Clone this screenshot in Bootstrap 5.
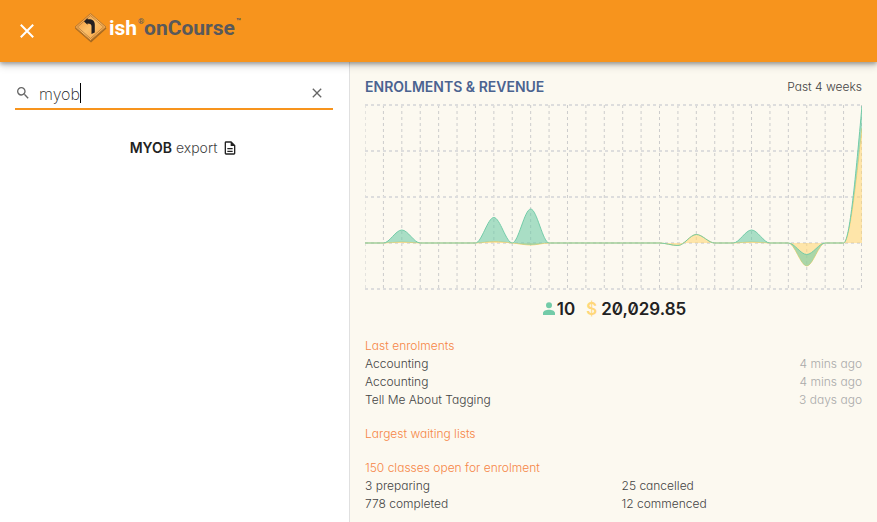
<!DOCTYPE html>
<html lang="en">
<head>
<meta charset="utf-8">
<meta name="viewport" content="width=device-width, initial-scale=1">
<title>ish onCourse</title>
<link href="https://cdn.jsdelivr.net/npm/bootstrap@5.3.0/dist/css/bootstrap.min.css" rel="stylesheet">
<style>
  body { font-family: Inter, "Liberation Sans", sans-serif; font-size: 14px; font-weight: 300; line-height: 18px; color: #222; background: #fff; }
  .topbar { height: 62px; background: #f7941d; box-shadow: 0 2px 4px rgba(0,0,0,.3), 0 4px 8px rgba(0,0,0,.15); z-index: 2; padding-left: 18px; gap: 38px; }
  .close-btn { width: 18px; height: 18px; }
  .brand { color: #58595b; font: bold 21px/28px Roboto, "Liberation Sans", sans-serif; margin-bottom: 6px; gap: 1px; }
  .brand sup { font-size: 8px; line-height: 8px; top: -6px; width: 5px; }
  .main-split { grid-template-columns: 39.8% 1fr; display: grid; }
  .search-pane { padding: 16px 16px 0 15px; }
  .search-field { height: 32px; border-bottom: 2px solid #f7941d; gap: 0; }
  .search-field input { width: 41px; font-size: 16px; font-weight: 200; line-height: 20px; color: #222; outline: 0; caret-color: transparent; padding: 2px 0 0; }
  .caret { width: 1px; height: 20px; background: #000; }
  .result { margin-top: 29px; padding-left: 20px; gap: 5px; color: #444; text-decoration: none; }
  .result b { font-weight: 600; color: #222; }
  .dash-pane { background: #fcf9f0; border-left: 1px solid #e0e0e0; padding: 16px 15px 9px; font-size: 12px; font-feature-settings: "cv11"; color: #444; }
  .dash-title { font-size: 14px; font-weight: 600; color: #4b6390; margin: 0; font-feature-settings: normal; line-height: 18px; }
  .chart { display: block; width: 100%; height: 186px; margin-top: 8px; }
  .totals { font-size: 17px; font-weight: 600; color: #222; margin: 9px 0 18px; line-height: 20px; gap: 11px; }
  .amount { font-feature-settings: "zero"; }
  .dollar { color: #ffd77a; }
  .section-title { font-size: 12px; font-weight: 300; line-height: 18px; color: #f68647; margin: 0; }
  .ago { color: #aaa; }
</style>
<script src="https://cdn.jsdelivr.net/npm/bootstrap@5.3.0/dist/js/bootstrap.bundle.min.js"></script>
</head>
<body class="min-vh-100 d-flex flex-column">
<header class="topbar d-flex align-items-center position-relative">
  <button type="button" class="close-btn btn p-0 border-0 d-flex align-items-center justify-content-center" aria-label="Close">
    <svg width="14" height="14" viewBox="0 0 14 14" stroke="#fff" stroke-width="2"><path d="M.8.8 13.2 13.2M13.2.8.8 13.2"/></svg>
  </button>
  <a href="#" class="brand d-flex align-items-center text-decoration-none">
    <svg width="34" height="32" viewBox="0 0 34 32">
      <defs><linearGradient id="sign" x1="0" y1="0" x2="1" y2="1"><stop offset="0" stop-color="#f08c28"/><stop offset=".5" stop-color="#fcc06a"/><stop offset="1" stop-color="#f79a32"/></linearGradient></defs>
      <path d="M17 3 32.500 16.500 17 30.500 1 16.500Z" fill="#8a5a20" opacity=".75"/>
      <path d="M16.500 1.500 32 15 16.500 28.500 1 15Z" fill="url(#sign)" stroke="#b87830" stroke-width="1"/>
      <path d="M16.500 3.500 29.500 15 16.500 26.500 3.500 15Z" fill="none" stroke="#a06a30" stroke-width=".6"/>
      <path d="M10 9.500 13.500 6V7.200C18 6.800 20.800 8.500 20.800 12.500L20.800 20.500 17.500 22V14.500C17.500 12.500 16.500 11.500 13.500 11.500V12.800Z" fill="#231f20"/>
    </svg>
    <span class="text-white">ish</span><sup>®</sup><span>onCourse</span><sup>™</sup>
  </a>
</header>
<main class="main-split flex-grow-1">
  <section class="search-pane">
    <div class="search-field d-flex align-items-center">
      <svg width="16" height="16" viewBox="0 0 24 24" fill="#666" class="me-2"><path d="M15.500 14h-.79l-.28-.27A6.470 6.470 0 0 0 16 9.500 6.500 6.500 0 1 0 9.500 16c1.610 0 3.090-.59 4.230-1.570l.27.28v.79l5 4.990L20.490 19l-4.990-5zm-6 0C7.010 14 5 11.990 5 9.500S7.010 5 9.500 5 14 7.010 14 9.500 11.990 14 9.500 14z"/></svg>
      <input type="text" class="border-0 bg-transparent" value="myob" aria-label="Search">
      <span class="caret"></span>
      <button type="button" class="btn p-0 border-0 ms-auto me-2 d-flex" aria-label="Clear search">
        <svg width="16" height="16" viewBox="0 0 24 24" fill="#666"><path d="M19 6.410 17.590 5 12 10.590 6.410 5 5 6.410 10.590 12 5 17.590 6.410 19 12 13.410 17.590 19 19 17.590 13.410 12z"/></svg>
      </button>
    </div>
    <div class="d-flex justify-content-center">
      <a href="#" class="result d-flex align-items-center"><span><b>MYOB</b> export</span>
        <svg width="16" height="16" viewBox="0 0 24 24" fill="#222"><path d="M8 16h8v2H8zm0-4h8v2H8zm6-10H6c-1.100 0-2 .9-2 2v16c0 1.100.89 2 1.990 2H18c1.100 0 2-.9 2-2V8l-6-6zm4 18H6V4h7v5h5v11z"/></svg></a>
    </div>
  </section>
  <section class="dash-pane">
    <div class="d-flex justify-content-between align-items-center">
      <h2 class="dash-title">ENROLMENTS &amp; REVENUE</h2><span>Past 4 weeks</span>
    </div>
    <svg class="chart" viewBox="0 0 497 186" preserveAspectRatio="none" role="img" aria-label="Enrolments and revenue by day">
      <g id="grid" stroke="#ccc" stroke-dasharray="3 3" fill="none"></g>
      <g id="areas" fill="none"></g>
    </svg>
    <div class="totals d-flex justify-content-center">
      <span class="d-flex align-items-center"><svg width="16" height="16" viewBox="0 0 24 24" fill="#72cba8"><path d="M12 11a4.500 4.500 0 1 0 0-9 4.500 4.500 0 0 0 0 9zm0 2c-4 0-9 1.800-9 5v3h18v-3c0-3.200-5-5-9-5z"/></svg><span>10</span></span>
      <span class="amount"><span class="dollar me-1">$</span>20,029.85</span>
    </div>
    <h3 class="section-title">Last enrolments</h3>
    <div class="d-flex justify-content-between"><span>Accounting</span><span class="ago">4 mins ago</span></div>
    <div class="d-flex justify-content-between"><span>Accounting</span><span class="ago">4 mins ago</span></div>
    <div class="d-flex justify-content-between"><span>Tell Me About Tagging</span><span class="ago">3 days ago</span></div>
    <h3 class="section-title mt-3">Largest waiting lists</h3>
    <h3 class="section-title mt-3">150 classes open for enrolment</h3>
    <div class="d-flex gap-3"><div class="col">3 preparing</div><div class="col">25 cancelled</div></div>
    <div class="d-flex gap-3"><div class="col">778 completed</div><div class="col">12 commenced</div></div>
  </section>
</main>
<script>
  const step = 497 / 27, zero = 139;
  let lines = '';
  for (let i = 0; i < 28; i++) lines += `<path d="M${Math.min(i * step, 496.5)} 1V185"/>`;
  for (let j = 0; j < 5; j++) lines += `<path stroke="#ddd" stroke-width="2" d="M0 ${1 + j * 46}H497"/>`;
  document.getElementById('grid').innerHTML = lines;

  // Daily values in chart units; enrolments are stacked on top of revenue.
  const revenue = Array(28).fill(0), total = Array(28).fill(0);
  Object.assign(revenue, {2: 1, 7: 1.5, 9: -2, 17: -2.5, 18: 8.5, 21: 1, 24: -23, 27: 115});
  Object.assign(total, {2: 13, 7: 25.5, 9: 34, 17: -2.5, 18: 8.5, 21: 13, 24: -11.5, 27: 137});
  // Monotone cubic interpolation between the points.
  function slopes(v) {
    return v.map((y, i) => {
      if (i === 0) return 0;
      if (i === v.length - 1) return 1.5 * (y - v[i - 1]);
      const a = y - v[i - 1], b = v[i + 1] - y;
      return a * b <= 0 ? 0 : 2 * a * b / (a + b);
    });
  }
  function curve(v, back) {
    const m = slopes(v), pt = (x, y) => `${(x * step).toFixed(2)} ${(zero - y).toFixed(2)}`;
    let d = '';
    if (!back) for (let i = 1; i < v.length; i++)
      d += `C${pt(i - 2 / 3, v[i - 1] + m[i - 1] / 3)} ${pt(i - 1 / 3, v[i] - m[i] / 3)} ${pt(i, v[i])}`;
    else for (let i = v.length - 1; i > 0; i--)
      d += `C${pt(i - 1 / 3, v[i] - m[i] / 3)} ${pt(i - 2 / 3, v[i - 1] + m[i - 1] / 3)} ${pt(i - 1, v[i - 1])}`;
    return d;
  }
  const r = curve(revenue), t = curve(total);
  document.getElementById('areas').innerHTML =
    `<path d="M0 ${zero}${r}V${zero}Z" fill="#ffd77a" fill-opacity=".6"/>` +
    `<path d="M0 ${zero}${r}" stroke="#ffd77a"/>` +
    `<path d="M0 ${zero}${t}V${zero - revenue[27]}${curve(revenue, true)}Z" fill="#72cba8" fill-opacity=".6"/>` +
    `<path d="M0 ${zero}${t}" stroke="#72cba8"/>`;
</script>
</body>
</html>
